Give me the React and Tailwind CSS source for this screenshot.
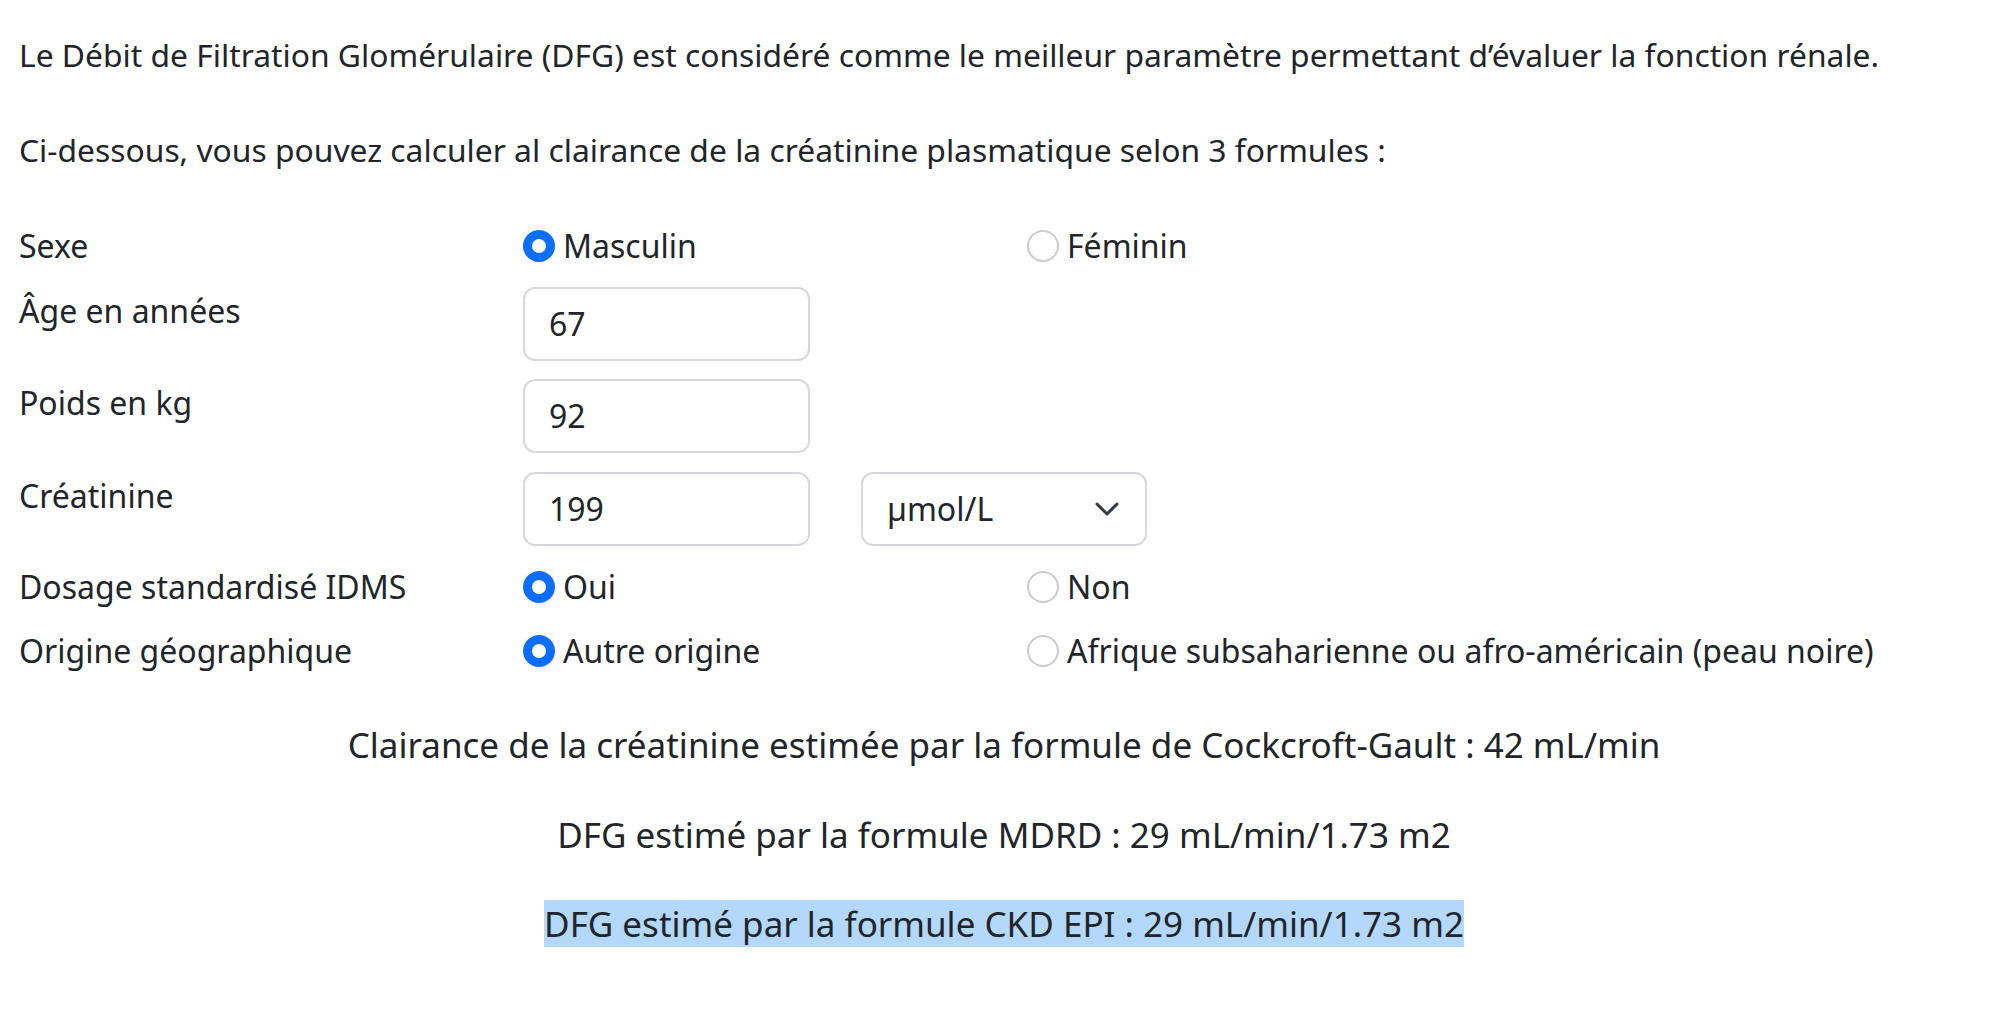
import React from "react";

function Radio({ checked, label }) {
  return (
    <div className="flex items-center w-[504px]">
      {checked ? (
        <span className="w-[32px] h-[32px] rounded-full bg-[#0d6efd] flex items-center justify-center shrink-0">
          <span className="w-[14px] h-[14px] rounded-full bg-white" />
        </span>
      ) : (
        <span className="w-[32px] h-[32px] rounded-full border-2 border-[#c9cbce] bg-white shrink-0" />
      )}
      <span className="ml-[8px] whitespace-nowrap">{label}</span>
    </div>
  );
}

function Field({ value }) {
  return (
    <div className="w-[287px] h-[74px] border-2 border-[#d6d8db] rounded-[12px] px-[24px] flex items-center bg-white">
      {value}
    </div>
  );
}

export default function App() {
  return (
    <div className="min-h-screen bg-white text-[#212529] font-['Noto_Sans',sans-serif] text-[32px] leading-[48px] pl-[19px] pr-[5px] pt-[31px]">
      <p className="whitespace-nowrap text-[31.8px]">
        Le Débit de Filtration Glomérulaire (DFG) est considéré comme le meilleur paramètre permettant d’évaluer la fonction rénale.
      </p>
      <p className="mt-[47px] text-[31.8px]">
        Ci-dessous, vous pouvez calculer al clairance de la créatinine plasmatique selon 3 formules :
      </p>

      <div className="mt-[48px] flex flex-col">
        <div className="flex items-center h-[48px]">
          <div className="w-[504px]">Sexe</div>
          <Radio checked label="Masculin" />
          <Radio label="Féminin" />
        </div>

        <div className="flex items-start mt-[17px]">
          <div className="w-[504px]">Âge en années</div>
          <Field value="67" />
        </div>

        <div className="flex items-start mt-[18px]">
          <div className="w-[504px]">Poids en kg</div>
          <Field value="92" />
        </div>

        <div className="flex items-start mt-[19px]">
          <div className="w-[504px]">Créatinine</div>
          <Field value="199" />
          <div className="ml-[51px] w-[286px] h-[74px] border-2 border-[#d6d8db] rounded-[12px] pl-[24px] pr-[26px] flex items-center justify-between bg-white">
            <span>µmol/L</span>
            <svg width="24" height="14" viewBox="0 0 24 14" fill="none">
              <path d="M2 2l10 10 10-10" stroke="#343a40" strokeWidth="3" strokeLinecap="round" strokeLinejoin="round" />
            </svg>
          </div>
        </div>

        <div className="flex items-center h-[48px] mt-[17px]">
          <div className="w-[504px]">Dosage standardisé IDMS</div>
          <Radio checked label="Oui" />
          <Radio label="Non" />
        </div>

        <div className="flex items-center h-[48px] mt-[16px]">
          <div className="w-[504px]">Origine géographique</div>
          <Radio checked label="Autre origine" />
          <Radio label="Afrique subsaharienne ou afro-américain (peau noire)" />
        </div>
      </div>

      <div className="mt-[44px] flex flex-col items-center text-center text-[35px] leading-[52px]">
        <p>Clairance de la créatinine estimée par la formule de Cockcroft-Gault : 42 mL/min</p>
        <p className="mt-[38px]">DFG estimé par la formule MDRD : 29 mL/min/1.73 m2</p>
        <p className="mt-[37px]">
          <span className="bg-[#b4d7fc]">DFG estimé par la formule CKD EPI : 29 mL/min/1.73 m2</span>
        </p>
      </div>
    </div>
  );
}
